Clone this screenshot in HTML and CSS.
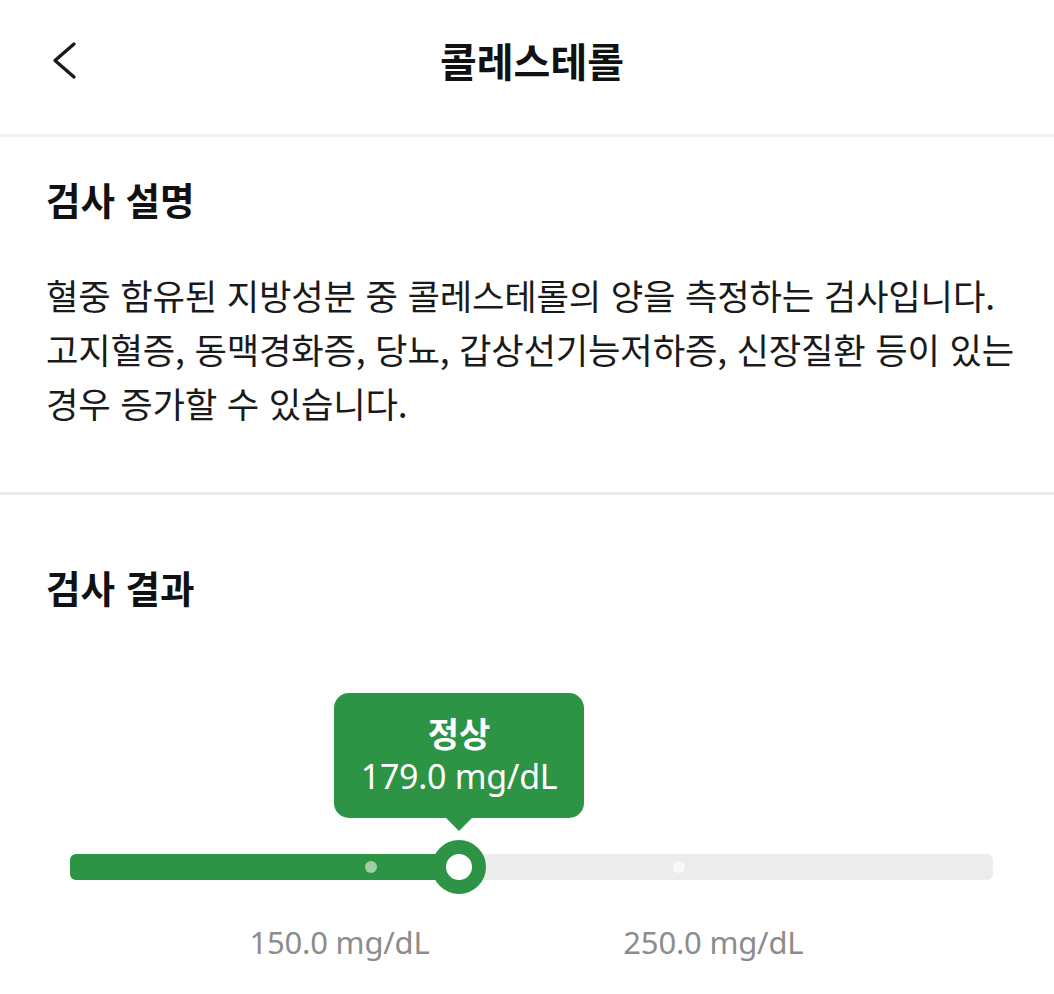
FILE: index.html
```html
<!DOCTYPE html>
<html lang="ko">
<head>
<meta charset="utf-8">
<title>콜레스테롤</title>
<link rel="stylesheet" href="styles.css">
</head>
<body>
<header class="topbar">
  <button class="back" aria-label="뒤로">
    <svg width="30" height="40" viewBox="0 0 30 40"><polyline points="23,4 4,20.5 23,37" fill="none" stroke="#1a1a1a" stroke-width="3.4" stroke-linecap="round" stroke-linejoin="round"/></svg>
  </button>
  <h1 class="title">콜레스테롤</h1>
  <span></span>
</header>

<section class="section desc">
  <h2 class="heading">검사 설명</h2>
  <p class="body-text">혈중 함유된 지방성분 중 콜레스테롤의 양을 측정하는 검사입니다.<br>고지혈증, 동맥경화증, 당뇨, 갑상선기능저하증, 신장질환 등이 있는<br>경우 증가할 수 있습니다.</p>
</section>

<section class="section result">
  <h2 class="heading">검사 결과</h2>
  <div class="slider">
    <div class="track">
      <div class="fill" style="width: 42.15%"></div>
      <span class="dot dot-on" style="left: 32.6%"></span>
      <span class="dot dot-off" style="left: 66%"></span>
      <span class="thumb" style="left: 42.15%"></span>
      <div class="bubble" style="left: 42.15%">
        <strong class="bubble-status">정상</strong>
        <span class="bubble-value">179.0 mg/dL</span>
      </div>
    </div>
    <div class="labels">
      <span class="label" style="left: 29.2%">150.0 mg/dL</span>
      <span class="label" style="left: 69.7%">250.0 mg/dL</span>
    </div>
  </div>
</section>
</body>
</html>
```
FILE: styles.css
```css
* { box-sizing: border-box; }
html, body { margin: 0; padding: 0; background: #fff; }
body {
  font-family: "Noto Sans CJK KR", "Noto Sans", sans-serif;
  color: #111;
  width: 1054px;
}
.topbar {
  height: 137px;
  display: grid;
  grid-template-columns: 1fr auto 1fr;
  align-items: center;
  border-bottom: 3px solid #f1f1f1;
  padding-bottom: 14px;
}
.back {
  justify-self: start;
  margin-left: 51px;
  margin-top: 0;
  padding: 0;
  border: 0;
  background: none;
  display: flex;
}
.title {
  margin: 0 0 0 10px;
  font-size: 40px;
  font-weight: 700;
  line-height: 52px;
  color: #111;
}
.section {
  padding: 0 30px 0 46px;
}
.desc {
  padding-top: 37px;
  padding-bottom: 62px;
  border-bottom: 3px solid #ececec;
}
.heading {
  margin: 0;
  font-size: 37.5px;
  font-weight: 700;
  line-height: 50px;
  color: #111;
}
.body-text {
  margin: 44px 0 0;
  font-size: 35.3px;
  line-height: 54px;
  white-space: nowrap;
  color: #1a1a1a;
  letter-spacing: -0.2px;
}
.result {
  padding-top: 67px;
  padding-left: 46px;
  padding-right: 0;
}
.slider {
  margin: 242px 0 0 24px;
  width: 923px;
}
.track {
  position: relative;
  height: 26px;
  background: #ececec;
  border-radius: 6px;
}
.fill {
  height: 100%;
  background: #2d9446;
  border-radius: 6px 0 0 6px;
}
.dot {
  position: absolute;
  top: 50%;
  width: 12px;
  height: 12px;
  border-radius: 50%;
  transform: translate(-50%, -50%);
}
.dot-on { background: #9ccfa6; }
.dot-off { background: #f9f9f9; }
.thumb {
  position: absolute;
  top: 50%;
  width: 54px;
  height: 54px;
  border-radius: 50%;
  border: 14px solid #2d9446;
  background: #fff;
  transform: translate(-50%, -50%);
}
.bubble {
  position: absolute;
  bottom: calc(100% + 36px);
  width: 250px;
  height: 125px;
  transform: translateX(-50%);
  background: #2d9446;
  border-radius: 15px;
  color: #fff;
  display: flex;
  flex-direction: column;
  align-items: center;
  justify-content: center;
  gap: 0;
  padding-bottom: 2px;
}
.bubble::after {
  content: "";
  position: absolute;
  left: 50%;
  top: 100%;
  transform: translateX(-50%);
  border-left: 13px solid transparent;
  border-right: 13px solid transparent;
  border-top: 13px solid #2d9446;
}
.bubble-status {
  font-size: 34px;
  font-weight: 700;
  line-height: 42px;
}
.bubble-value {
  font-family: "Noto Sans", sans-serif;
  font-size: 34px;
  line-height: 44px;
  letter-spacing: -0.3px;
}
.labels {
  position: relative;
  height: 90px;
}
.label {
  position: absolute;
  top: 42px;
  transform: translateX(-50%);
  font-family: "Noto Sans", sans-serif;
  font-size: 31px;
  line-height: 40px;
  color: #8c8c8c;
  white-space: nowrap;
  letter-spacing: -0.2px;
}
```
